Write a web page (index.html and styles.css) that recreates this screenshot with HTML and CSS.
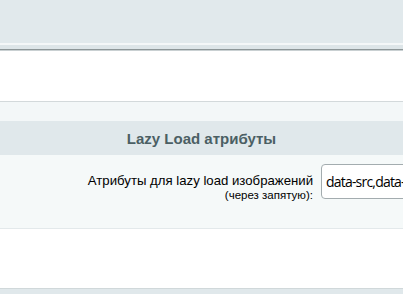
FILE: index.html
```html
<!DOCTYPE html>
<html>
<head>
<meta charset="utf-8">
<link rel="stylesheet" href="styles.css">
</head>
<body>
<div class="topband"></div>
<div class="sep"></div>
<div class="blank"></div>
<div class="section">
  <div class="pad"></div>
  <div class="heading">Lazy Load атрибуты</div>
  <div class="row">
    <div class="label">
      <div class="main">Атрибуты для lazy load изображений</div>
      <div class="sub">(через запятую):</div>
    </div>
    <div class="field"><div class="input">data-src,data-srcset</div></div>
  </div>
</div>
<div class="blank2"></div>
<div class="bottomband"></div>
</body>
</html>
```
FILE: styles.css
```css
html, body {
  margin: 0;
  padding: 0;
  background: #fff;
  overflow: hidden;
  font-family: "Liberation Sans", Arial, sans-serif;
}
body {
  width: 403px;
  height: 294px;
}
.topband {
  height: 43px;
  background: #e1e9ec;
  border-bottom: 2px solid #f4f7f8;
}
.sep {
  height: 4px;
  background: #dde5e8;
  border-bottom: 1px solid #8d9698;
  box-shadow: 0 1px 0 #c9d0d2;
}
.blank {
  height: 51px;
}
.section {
  border-top: 1px solid #d3d9db;
  border-bottom: 1px solid #e3e9eb;
  background: #f3f7f8;
}
.pad {
  height: 19px;
}
.heading {
  height: 34px;
  background: #e0e8eb;
  color: #4b5f64;
  font-weight: bold;
  font-size: 15px;
  display: flex;
  align-items: center;
  justify-content: center;
}
.row {
  height: 73px;
  background: #f5f9f9;
  display: flex;
  align-items: flex-start;
  padding-top: 9px;
  box-sizing: border-box;
}
.label {
  width: 313px;
  text-align: right;
  color: #000;
  padding-top: 9px;
}
.main {
  font-size: 13.2px;
  line-height: 15px;
}
.sub {
  font-size: 11.5px;
  line-height: 13px;
  margin-top: 1px;
}
.field {
  flex: 1;
  padding-left: 8px;
  overflow: hidden;
}
.input {
  width: 200px;
  height: 35px;
  box-sizing: border-box;
  border: 1px solid #a3acaf;
  border-radius: 4px;
  background: #fff;
  font-size: 14px;
  letter-spacing: -0.8px;
  font-family: "Open Sans", "Liberation Sans", sans-serif;
  color: #000;
  padding: 7px 0 0 4px;
  white-space: nowrap;
  overflow: hidden;
}
.blank2 {
  height: 59px;
}
.bottomband {
  height: 6px;
  border-top: 1px solid #d0d8da;
  background: #e0e8eb;
}
```
